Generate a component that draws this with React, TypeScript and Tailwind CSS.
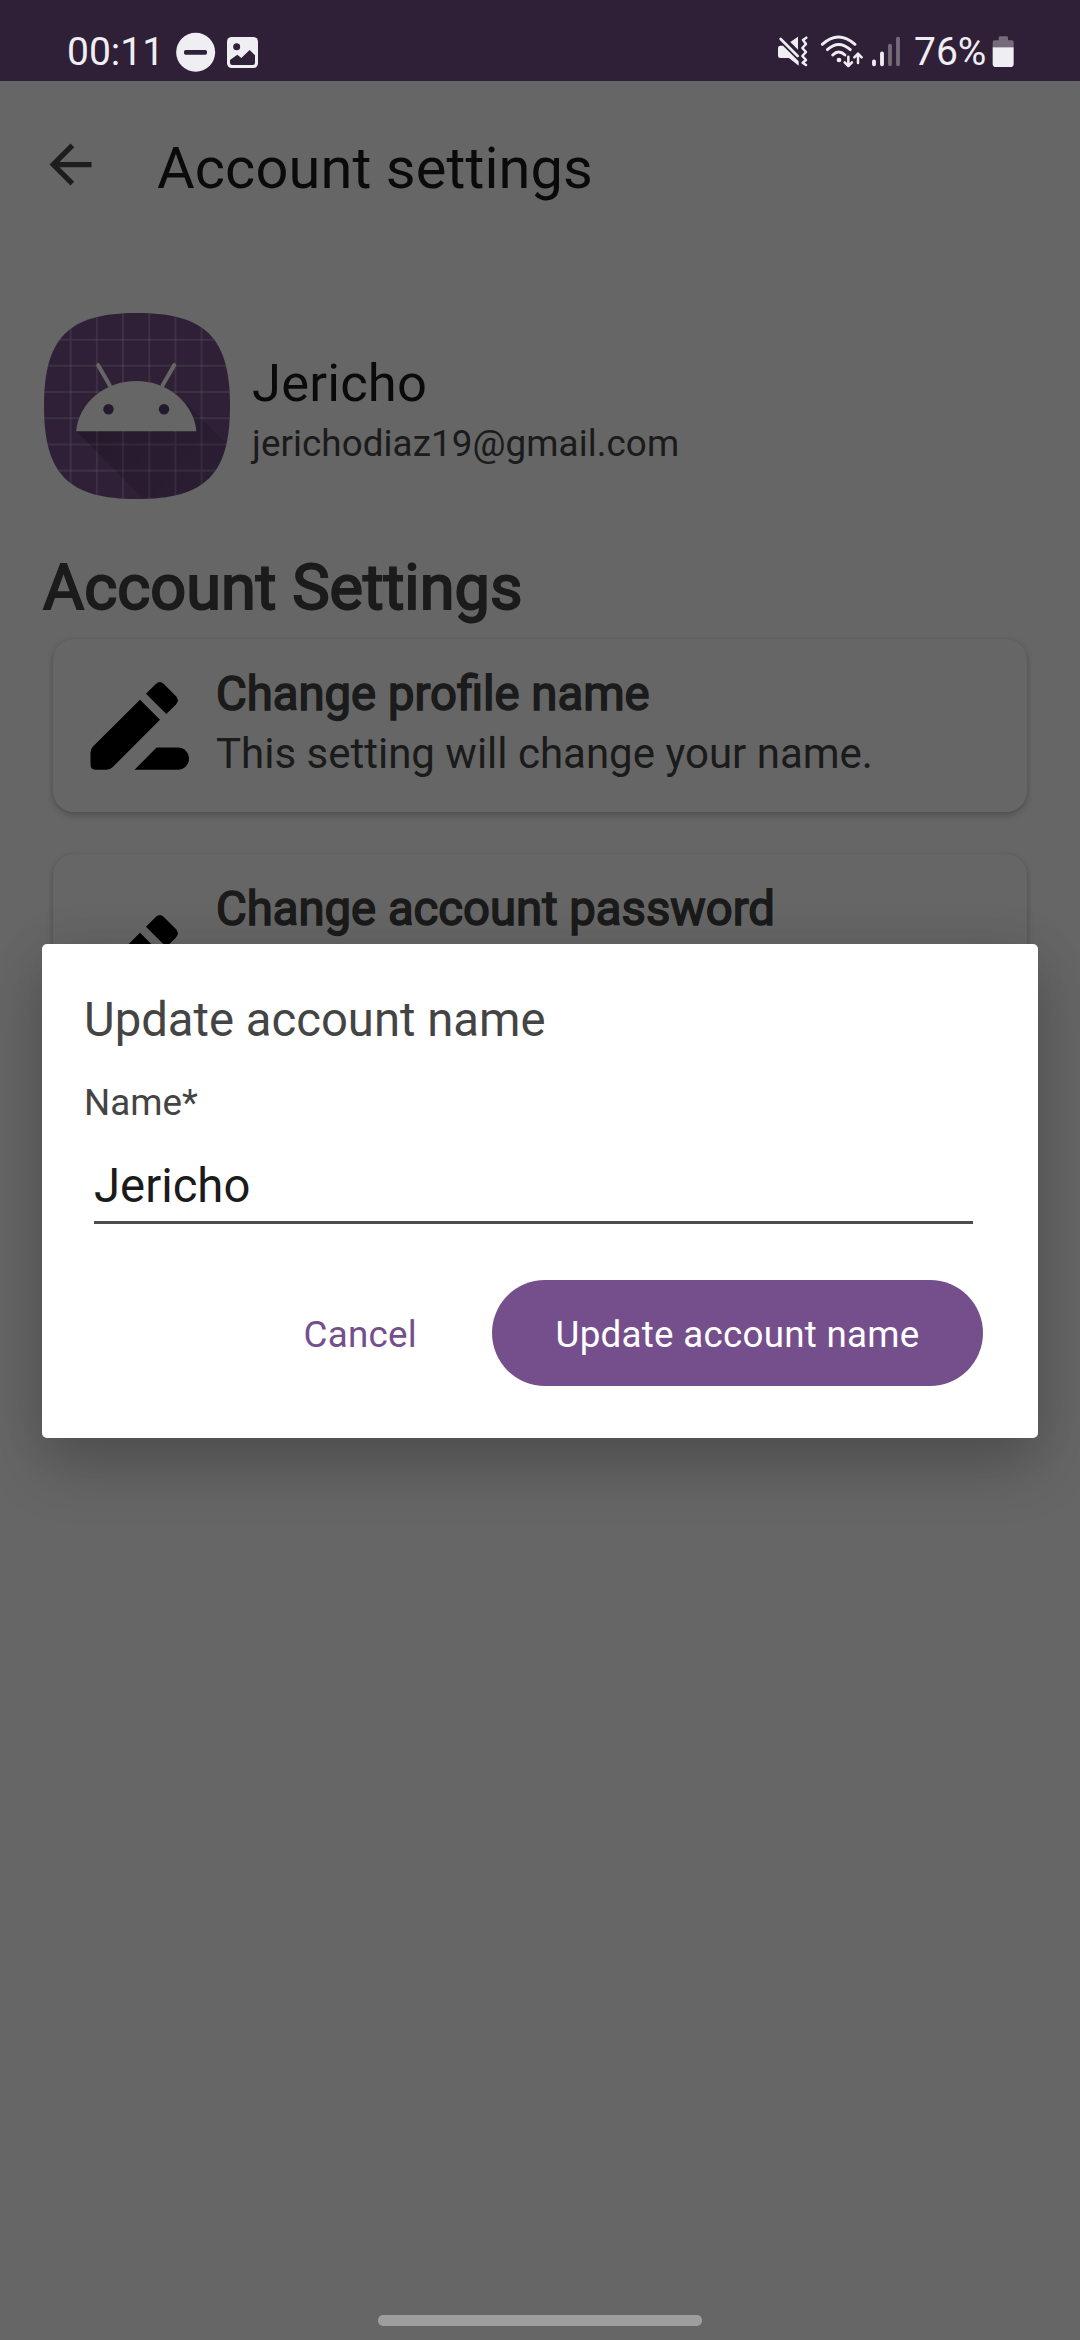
import React from "react";

const robotoFont = "font-['Roboto','Liberation_Sans',sans-serif]";

function StatusBar() {
  return (
    <div className="absolute inset-x-0 top-0 z-20 flex h-[81px] justify-between pt-[31px] pr-[66px] pl-[67px] text-[39px] leading-[42px] text-[#efeef3]">
      <div className="flex">
        <span className="w-[109px]">00:11</span>
        <svg className="h-[42px] w-[84px]" viewBox="408 93 252 126">
          <circle cx="467" cy="157" r="58.5" fill="#efeef3" />
          <rect x="432" y="150" width="69" height="14" rx="5" fill="#2f2138" />
          <rect x="561" y="111" width="93" height="93" rx="14" fill="#efeef3" />
          <circle cx="590" cy="140" r="10.5" fill="#2f2138" />
          <path d="M570 180L592 164L604 174L629 150L645 166V188Q645 195 638 195H577Q570 195 570 188Z" fill="#2f2138" />
        </svg>
      </div>
      <div className="flex">
        <svg className="h-[42px] w-[125px]" viewBox="48 93 375 126" fill="none" stroke="#efeef3" strokeLinecap="round">
          <path d="M88 126L111 110V149Z" fill="#efeef3" stroke="none" />
          <path d="M66 137L113 184V197L84 174H58Q51 174 51 167V144Q51 137 58 137Z" fill="#efeef3" stroke="none" />
          <path d="M59 117L110 168" strokeWidth="8" />
          <path d="M136 113L126 120L135 132L124 144L135 156L124 168L135 180L125 188L135 195" strokeWidth="7.5" strokeLinejoin="round" />
          <path d="M184 133Q232 89 282 133" strokeWidth="8.5" />
          <path d="M199 149Q233 118 268 149" strokeWidth="8.5" />
          <path d="M215 165Q233 147 252 165" strokeWidth="8.5" />
          <circle cx="234" cy="180" r="7" fill="#efeef3" stroke="none" />
          <path d="M262 170V197M251 187L262 198L273 187M291 189V162M280 172L291 161L302 172" strokeWidth="7.5" strokeLinejoin="round" />
          <path d="M339 184V193M363 160V193" strokeWidth="11.5" />
          <path d="M387 137V193M411 116V193" strokeWidth="11.5" stroke="#756b7b" />
        </svg>
        <span className="ml-[12px] w-[78px] whitespace-nowrap">76%</span>
        <svg className="h-[42px] w-[22px]" viewBox="694 93 66 126">
          <path d="M696 142V126Q696 121 701 121H714V113Q714 109 718 109H738Q742 109 742 113V121H754Q759 121 759 126V142Z" fill="#756b7b" />
          <path d="M696 142H759V191Q759 201 749 201H706Q696 201 696 191Z" fill="#efeef3" />
        </svg>
      </div>
    </div>
  );
}

function Avatar() {
  const lines = [26.6, 52.7, 78.8, 105, 131.1, 157.2];
  return (
    <svg className="h-[186px] w-[186px] shrink-0" viewBox="0 0 185.5 185.5">
      <defs>
        <clipPath id="squircle">
          <path d="M92.7 0C161 0 185.5 24.5 185.5 92.7S161 185.5 92.7 185.5S0 161 0 92.7S24.5 0 92.7 0Z" />
        </clipPath>
        <linearGradient id="shade" x1="32" y1="63" x2="180" y2="190" gradientUnits="userSpaceOnUse">
          <stop offset="0" stopColor="#000" stopOpacity="0.25" />
          <stop offset="1" stopColor="#000" stopOpacity="0.06" />
        </linearGradient>
      </defs>
      <g clipPath="url(#squircle)">
        <rect width="186" height="186" fill="#75528c" />
        {lines.map((p) => (
          <path key={p} d={`M${p} 0V186M0 ${p}H186`} stroke="#fff" strokeOpacity="0.23" strokeWidth="2" />
        ))}
        <path d="M32 118L98 184H186V134L142 90Z" fill="url(#shade)" />
      </g>
      <path d="M54 52L65.5 72M129.8 52L118.3 72" stroke="#fff" strokeWidth="4" strokeLinecap="round" />
      <path d="M32 118A60.2 54.7 0 0 1 152 118Z" fill="#fff" />
      <circle cx="64.3" cy="96" r="5.2" fill="#5d4070" />
      <circle cx="119.7" cy="96" r="5.2" fill="#5d4070" />
    </svg>
  );
}

function RenameIcon() {
  return (
    <svg className="ml-[37px] h-[88px] w-[99px] shrink-0" viewBox="0 0 99 88">
      <path d="M50 17.8L70 37.8L22.8 85Q20 87.8 16.5 87.8H6Q0.5 87.8 0.5 82.3V70.5Q0.5 67 3 64.6Z" />
      <path d="M56 11.8L66 1.8Q69.8 -1.6 73.6 1.8L86 14.2Q89.8 18.4 86 22.4L76.3 32.1Z" />
      <path d="M44.5 87.8L66.6 65.5H87.8A11.15 11.15 0 0 1 87.8 87.8Z" />
    </svg>
  );
}

type CardProps = { title: string; detail?: string; tall?: boolean };

function SettingCard({ title, detail, tall }: CardProps) {
  return (
    <div
      className={`${tall ? "h-[210px]" : "h-[173px]"} flex items-center rounded-[21px] bg-white shadow-[0_3px_7px_rgba(0,0,0,0.22),0_0_3px_rgba(0,0,0,0.08)]`}
    >
      <RenameIcon />
      <div className="ml-[27px] self-stretch pt-[27px] whitespace-nowrap text-[#444]">
        <h3 className="text-[47.25px] leading-[56px] [-webkit-text-stroke:1.6px_#444]">{title}</h3>
        {detail && <p className="mt-[7px] text-[42px] leading-[50px]">{detail}</p>}
      </div>
    </div>
  );
}

function UpdateNameDialog() {
  return (
    <div className="h-[494px] w-[996px] rounded-[5px] bg-white pt-[48px] pr-[55px] pl-[42px] text-[#444] shadow-[0_30px_60px_rgba(0,0,0,0.2),0_0_50px_rgba(0,0,0,0.08)]">
      <h2 className="text-[47.25px] leading-[56px]">Update account name</h2>
      <p className="mt-[33px] text-[36.75px] leading-[44px]">Name*</p>
      <div className="mt-[33px] mr-[10px] ml-[10px] h-[66px] border-b-[3px] border-[#4d4d4d] text-[47.25px] leading-[56px] text-[#1c1b1b]">
        Jericho
      </div>
      <div className="mt-[56px] flex items-center justify-end text-[36.75px] leading-[44px] tracking-[0.26px]">
        <button className="mr-[75px] pt-[3px] text-[#754f8c]">Cancel</button>
        <button className="h-[106px] w-[491px] rounded-full bg-[#754f8c] pt-[3px] text-white">Update account name</button>
      </div>
    </div>
  );
}

export default function App() {
  return (
    <div className={`${robotoFont} relative h-[2340px] w-[1080px] overflow-hidden bg-[#fefefe]`}>
      <div className="h-[81px] bg-[#75528c]" />
      <header className="flex h-[166px] items-center pl-[39px]">
        <svg className="h-[63px] w-[63px]" viewBox="0 0 24 24" fill="#494949">
          <path d="M20 11H7.83l5.59-5.59L12 4l-8 8 8 8 1.41-1.41L7.83 13H20v-2z" />
        </svg>
        <h1 className="mt-[7px] ml-[55px] text-[57.75px] leading-[68px] tracking-[0.1px] text-[#1b1b1b]">Account settings</h1>
      </header>
      <section className="mt-[66px] flex pl-[44px]">
        <Avatar />
        <div className="ml-[22px] pt-[39px]">
          <p className="text-[52.5px] leading-[62px] tracking-[0.2px] text-[#1b1b1b]">Jericho</p>
          <p className="mt-[8px] text-[36.75px] leading-[44px] tracking-[0.09px] text-[#444]">jerichodiaz19@gmail.com</p>
        </div>
      </section>
      <main className="px-[53px] pt-[52px]">
        <h2 className="-ml-[10px] text-[63px] leading-[74px] tracking-[0.05px] text-[#444] [-webkit-text-stroke:2px_#444]">Account Settings</h2>
        <div className="mt-[14px] flex flex-col gap-[42px]">
          <SettingCard title="Change profile name" detail="This setting will change your name." />
          <SettingCard title="Change account password" tall />
        </div>
      </main>
      <div className="absolute inset-0 z-10 flex flex-col items-center bg-black/60 pt-[944px]">
        <UpdateNameDialog />
        <div className="mt-auto mb-[14px] h-[11px] w-[324px] rounded-[5px] bg-[#9e9e9e]" />
      </div>
      <StatusBar />
    </div>
  );
}
